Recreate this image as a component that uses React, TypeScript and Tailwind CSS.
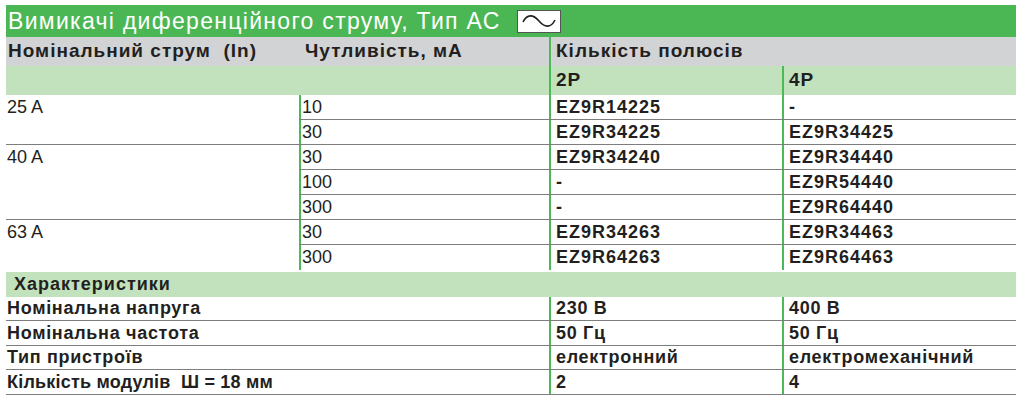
import React from "react";

const GREEN_LINE = "border-l-2 border-[#4cb857]";
const ROW_LINE = "border-b border-[#7d7d7d]";
const BOLD = "text-[18px] font-bold tracking-[0.7px]";
const HEAD = "text-[19px] font-bold tracking-[1px]";
const CODE = "text-[18px] font-bold tracking-[1px]";

type Group = {
  current: string;
  rows: { sens: string; p2: string; p4: string }[];
};

const groups: Group[] = [
  {
    current: "25 A",
    rows: [
      { sens: "10", p2: "EZ9R14225", p4: "-" },
      { sens: "30", p2: "EZ9R34225", p4: "EZ9R34425" },
    ],
  },
  {
    current: "40 A",
    rows: [
      { sens: "30", p2: "EZ9R34240", p4: "EZ9R34440" },
      { sens: "100", p2: "-", p4: "EZ9R54440" },
      { sens: "300", p2: "-", p4: "EZ9R64440" },
    ],
  },
  {
    current: "63 A",
    rows: [
      { sens: "30", p2: "EZ9R34263", p4: "EZ9R34463" },
      { sens: "300", p2: "EZ9R64263", p4: "EZ9R64463" },
    ],
  },
];

const specs = [
  { label: "Номінальна напруга", p2: "230 В", p4: "400 В", h: "h-[24px]", t: "" },
  { label: "Номінальна частота", p2: "50 Гц", p4: "50 Гц", h: "h-[25px]", t: "" },
  { label: "Тип пристроїв", p2: "електронний", p4: "електромеханічний", h: "h-[24px]", t: "" },
  { label: "Кількість модулів  Ш = 18 мм", p2: "2", p4: "4", h: "h-[25px]", t: "tracking-[0.2px]" },
];

// маленька іконка змінного струму
const AcIcon = () => (
  <span className="ml-[16px] flex h-[23px] w-[44px] items-center justify-center border border-[#555] bg-white">
    <svg width="34" height="16" viewBox="0 0 34 16" fill="none">
      <path
        d="M1 9 C 5 1, 11 1, 17 8 C 23 15, 29 15, 33 7"
        stroke="#231f20"
        strokeWidth="1.6"
        fill="none"
      />
    </svg>
  </span>
);

export default function App() {
  return (
    <div
      className="min-h-screen bg-white pl-[6px] pt-[5px] text-[#231f20]"
      style={{ fontFamily: '"Liberation Sans", Arial, sans-serif' }}
    >
      <div className="w-[1010px]">
        {/* заголовок */}
        <div className="flex h-[32px] items-center bg-[#4bb754] pl-[2px] text-[23px] tracking-[1.3px] text-white">
          <span>Вимикачі диференційного струму, Тип АС</span>
          <AcIcon />
        </div>

        {/* шапка таблиці */}
        <div className={`flex h-[29px] bg-[#d1d3d4] ${HEAD}`}>
          <div className="flex w-[293px] items-center pl-[2px] whitespace-pre">Номінальний струм  (In)</div>
          <div className="flex w-[250px] items-center pl-[6px]">Чутливість, мА</div>
          <div className={`flex flex-1 items-center pl-[5px] ${GREEN_LINE}`}>Кількість полюсів</div>
        </div>
        <div className={`flex h-[29px] bg-[#c2e1bd] ${HEAD}`}>
          <div className="w-[543px]" />
          <div className={`flex w-[233px] items-center pl-[5px] ${GREEN_LINE}`}>2P</div>
          <div className={`flex flex-1 items-center pl-[5px] ${GREEN_LINE}`}>4P</div>
        </div>

        {/* дані */}
        {groups.map((g, gi) => {
          const last = gi === groups.length - 1;
          return (
            <div key={g.current} className={`flex ${last ? "" : ROW_LINE}`}>
              <div className="w-[293px] pl-[1px] pt-[2px] text-[18px] leading-[20px]">{g.current}</div>
              <div className="flex-1">
                {g.rows.map((r, ri) => {
                  const lastRow = ri === g.rows.length - 1;
                  const h = lastRow ? (last ? "h-[25px]" : "h-[24px]") : "h-[25px]";
                  return (
                    <div key={ri} className={`flex ${h} ${lastRow ? "" : ROW_LINE}`}>
                      <div className={`flex w-[250px] items-center pl-[1px] text-[18px] ${GREEN_LINE}`}>{r.sens}</div>
                      <div className={`flex w-[233px] items-center pl-[5px] ${CODE} ${GREEN_LINE}`}>{r.p2}</div>
                      <div className={`flex flex-1 items-center pl-[5px] ${CODE} ${GREEN_LINE}`}>{r.p4}</div>
                    </div>
                  );
                })}
              </div>
            </div>
          );
        })}

        {/* характеристики */}
        <div className={`mt-[2px] flex h-[25px] items-center bg-[#c2e1bd] pl-[8px] ${BOLD} tracking-[1px]`}>
          Характеристики
        </div>
        {specs.map((s) => (
          <div key={s.label} className={`flex ${s.h} ${BOLD} ${ROW_LINE}`}>
            <div className={`flex w-[543px] items-center pl-[1px] whitespace-pre ${s.t}`}>{s.label}</div>
            <div className={`flex w-[233px] items-center pl-[5px] ${GREEN_LINE}`}>{s.p2}</div>
            <div className={`flex flex-1 items-center pl-[5px] ${GREEN_LINE}`}>{s.p4}</div>
          </div>
        ))}
      </div>
    </div>
  );
}
